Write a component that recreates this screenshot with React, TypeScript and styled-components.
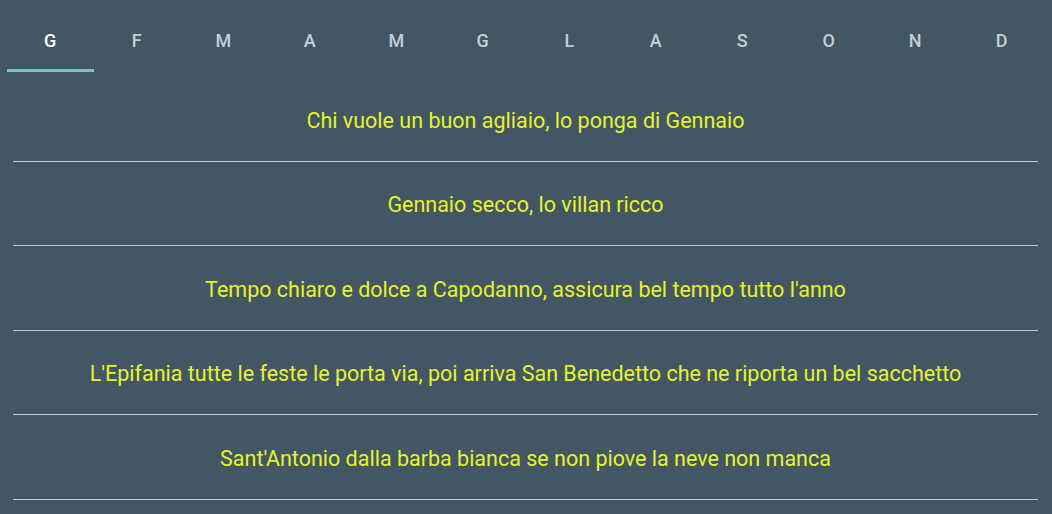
import React, { useState } from "react";
import styled, { createGlobalStyle } from "styled-components";

const Global = createGlobalStyle`
  html, body { margin: 0; padding: 0; background: #425664; }
  body { font-family: Roboto, "Noto Sans", sans-serif; }
`;

const Page = styled.div`
  width: 1052px;
  height: 514px;
  background: #425664;
  overflow: hidden;
  display: flex;
  flex-direction: column;
`;

const TabBar = styled.div`
  display: grid;
  grid-template-columns: repeat(12, 1fr);
  padding: 0 7px;
  height: 72px;
`;

const Tab = styled.button<{ $active: boolean }>`
  position: relative;
  background: none;
  border: none;
  padding: 12px 0 3px;
  font-family: Roboto, sans-serif;
  font-weight: 500;
  font-size: 18px;
  color: ${(p) => (p.$active ? "#ffffff" : "#c3d0da")};
  cursor: pointer;
  display: flex;
  align-items: center;
  justify-content: center;
  &::after {
    content: "";
    position: absolute;
    left: 0;
    right: 0;
    bottom: 0;
    height: 3px;
    background: ${(p) => (p.$active ? "#7cc4c4" : "transparent")};
  }
`;

const List = styled.div`
  display: flex;
  flex-direction: column;
  padding: 5px 14px 0 13px;
`;

const Row = styled.div`
  flex: none;
  height: 84.5px;
  border-bottom: 1.5px solid #b9cde0;
  display: flex;
  align-items: center;
  justify-content: center;
  padding-top: 3px;
  box-sizing: border-box;
  color: #e8f22a;
  font-size: 21.5px;
  text-align: center;
`;

const months = ["G", "F", "M", "A", "M", "G", "L", "A", "S", "O", "N", "D"];
const proverbs = [
  "Chi vuole un buon agliaio, lo ponga di Gennaio",
  "Gennaio secco, lo villan ricco",
  "Tempo chiaro e dolce a Capodanno, assicura bel tempo tutto l'anno",
  "L'Epifania tutte le feste le porta via, poi arriva San Benedetto che ne riporta un bel sacchetto",
  "Sant'Antonio dalla barba bianca se non piove la neve non manca",
];

export default function App() {
  const [active, setActive] = useState(0);
  return (
    <Page>
      <Global />
      <TabBar>
        {months.map((m, i) => (
          <Tab key={i} $active={i === active} onClick={() => setActive(i)}>
            {m}
          </Tab>
        ))}
      </TabBar>
      <List>
        {proverbs.map((p, i) => (
          <Row key={i}>{p}</Row>
        ))}
      </List>
    </Page>
  );
}
